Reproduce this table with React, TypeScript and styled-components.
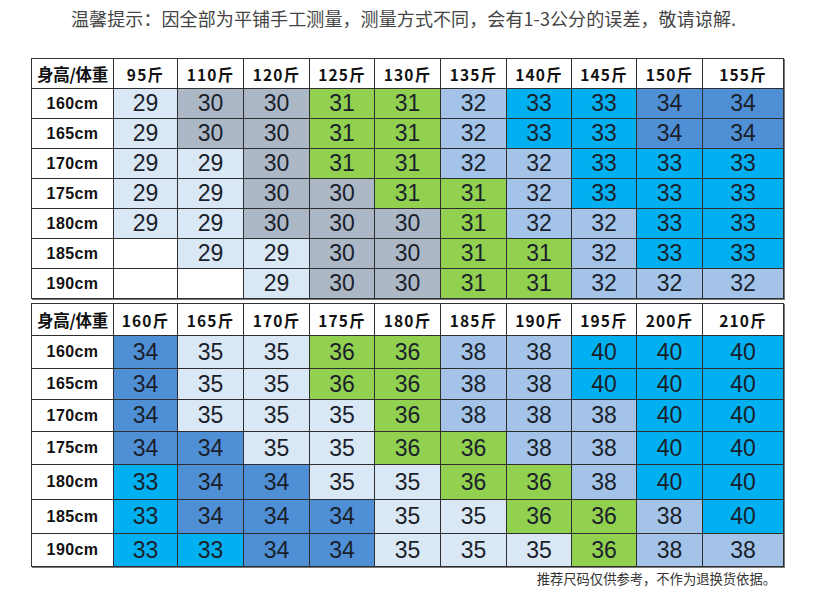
import React, { FC } from "react";
import styled, { createGlobalStyle } from "styled-components";

type Tone = "pale" | "slate" | "green" | "sky" | "cyan" | "blue" | "none";

const toneColors: Record<Tone, string> = {
  pale: "#dae7f5",
  slate: "#adb8c7",
  green: "#92d050",
  sky: "#a3c3e8",
  cyan: "#00b0f0",
  blue: "#4f8fd6",
  none: "#ffffff",
};

const toneOf: Record<string, Tone> = {
  "29": "pale",
  "30": "slate",
  "31": "green",
  "32": "sky",
  "33": "cyan",
  "34": "blue",
  "35": "pale",
  "36": "green",
  "38": "sky",
  "40": "cyan",
};

interface SizeChart {
  weights: string[];
  headerHeight: number;
  rowHeights: number[];
  rows: { height: string; sizes: string[] }[];
}

const heights = ["160cm", "165cm", "170cm", "175cm", "180cm", "185cm", "190cm"];

const toRows = (data: string[][]) =>
  data.map((sizes, i) => ({ height: heights[i], sizes }));

const lightChart: SizeChart = {
  weights: ["95斤", "110斤", "120斤", "125斤", "130斤", "135斤", "140斤", "145斤", "150斤", "155斤"],
  headerHeight: 30,
  rowHeights: [30, 30, 30, 30, 30, 30, 30],
  rows: toRows([
    ["29", "30", "30", "31", "31", "32", "33", "33", "34", "34"],
    ["29", "30", "30", "31", "31", "32", "33", "33", "34", "34"],
    ["29", "29", "30", "31", "31", "32", "32", "33", "33", "33"],
    ["29", "29", "30", "30", "31", "31", "32", "33", "33", "33"],
    ["29", "29", "30", "30", "30", "31", "32", "32", "33", "33"],
    ["", "29", "29", "30", "30", "31", "31", "32", "33", "33"],
    ["", "", "29", "30", "30", "31", "31", "32", "32", "32"],
  ]),
};

const heavyChart: SizeChart = {
  weights: ["160斤", "165斤", "170斤", "175斤", "180斤", "185斤", "190斤", "195斤", "200斤", "210斤"],
  headerHeight: 32,
  rowHeights: [33, 31, 32, 33, 35, 34, 33],
  rows: toRows([
    ["34", "35", "35", "36", "36", "38", "38", "40", "40", "40"],
    ["34", "35", "35", "36", "36", "38", "38", "40", "40", "40"],
    ["34", "35", "35", "35", "36", "38", "38", "38", "40", "40"],
    ["34", "34", "35", "35", "36", "36", "38", "38", "40", "40"],
    ["33", "34", "34", "35", "35", "36", "36", "38", "40", "40"],
    ["33", "34", "34", "34", "35", "35", "36", "36", "38", "40"],
    ["33", "33", "34", "34", "35", "35", "35", "36", "38", "38"],
  ]),
};

const SizeTable: FC<{ chart: SizeChart }> = ({ chart }) => (
  <TableGrid $rows={[chart.headerHeight, ...chart.rowHeights].map((h) => `${h}px`).join(" ")}>
    <CornerCell>身高/体重</CornerCell>
    {chart.weights.map((w) => (
      <WeightCell key={w}>{w}</WeightCell>
    ))}
    {chart.rows.map((row) => (
      <React.Fragment key={row.height}>
        <HeightCell>{row.height}</HeightCell>
        {row.sizes.map((size, i) => (
          <SizeCell key={i} $tone={size ? toneOf[size] : "none"}>
            {size}
          </SizeCell>
        ))}
      </React.Fragment>
    ))}
  </TableGrid>
);

const App: FC = () => (
  <Page>
    <GlobalStyle />
    <Notice>温馨提示：因全部为平铺手工测量，测量方式不同，会有1-3公分的误差，敬请谅解.</Notice>
    <Charts>
      <SizeTable chart={lightChart} />
      <SizeTable chart={heavyChart} />
    </Charts>
    <Disclaimer>推荐尺码仅供参考，不作为退换货依据。</Disclaimer>
  </Page>
);

export default App;

const GlobalStyle = createGlobalStyle`
  body {
    margin: 0;
    background: #ffffff;
    font-family: "Noto Sans CJK SC", "Noto Sans", sans-serif;
  }
`;

const Page = styled.div`
  width: 815px;
  height: 602px;
  display: flex;
  flex-direction: column;
  overflow: hidden;
`;

const Notice = styled.div`
  padding: 6px 0 0 71px;
  height: 24px;
  font-size: 18px;
  line-height: 24px;
  color: #444;
  letter-spacing: 0.1px;
`;

const Charts = styled.div`
  margin: 28px 0 0 31px;
  display: flex;
  flex-direction: column;
  gap: 4px;
`;

const TableGrid = styled.div<{ $rows: string }>`
  display: grid;
  grid-template-columns: 82px 64px 66px 66px 65px 66px 66px 65px 65px 66px 81px;
  grid-template-rows: ${(p) => p.$rows};
  width: max-content;
  border-top: 1px solid #333;
  border-left: 1px solid #333;
  box-shadow: 1px 1px 0 #777;
`;

const BaseCell = styled.div`
  box-sizing: border-box;
  display: flex;
  align-items: center;
  justify-content: center;
  border-right: 1px solid #2e2e2e;
  border-bottom: 1px solid #2e2e2e;
  background: #ffffff;
  color: #111;
`;

const CornerCell = styled(BaseCell)`
  font-size: 16.5px;
  font-weight: 700;
  letter-spacing: -0.3px;
`;

const WeightCell = styled(BaseCell)`
  font-size: 15.5px;
  font-weight: 700;
  letter-spacing: 1.2px;
  padding-top: 1px;
`;

const HeightCell = styled(BaseCell)`
  font-family: "Liberation Sans", Arial, sans-serif;
  font-size: 16px;
  font-weight: 700;
  letter-spacing: 0.4px;
`;

const SizeCell = styled(BaseCell)<{ $tone: Tone }>`
  background: ${(p) => toneColors[p.$tone]};
  font-family: "Liberation Sans", Arial, sans-serif;
  font-size: 23px;
  color: #1a1f2b;
`;

const Disclaimer = styled.div`
  margin-top: 3px;
  width: 776px;
  text-align: right;
  font-size: 13.3px;
  line-height: 18px;
  color: #333;
`;
